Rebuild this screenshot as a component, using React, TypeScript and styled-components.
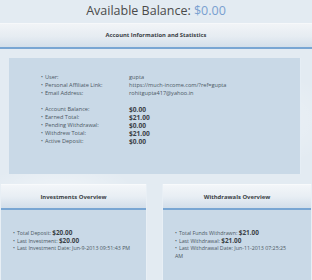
import React from 'react';
import styled, { createGlobalStyle } from 'styled-components';

const GlobalStyle = createGlobalStyle`
  html, body {
    margin: 0;
    padding: 0;
  }

  body {
    width: 312px;
    height: 280px;
    overflow: hidden;
    font-family: "Open Sans", "Liberation Sans", sans-serif;
    background:
      radial-gradient(ellipse 80px 40px at 60px 200px, rgba(255, 255, 255, 0.5), transparent),
      radial-gradient(ellipse 90px 50px at 250px 120px, rgba(255, 255, 255, 0.4), transparent),
      #e3ebf2;
  }
`;

const Page = styled.div`
  width: 312px;
`;

const Balance = styled.div`
  height: 23px;
  line-height: 22px;
  text-align: center;
  font-size: 12.5px;
  color: #4a4a4a;

  span {
    color: #79a0d0;
  }
`;

const BarHeader = styled.div`
  height: 23px;
  line-height: 23px;
  text-align: center;
  font-size: 5.8px;
  font-weight: 700;
  color: #3a3f45;
  border-top: 1px solid #f6f8fa;
  border-bottom: 2px solid #79a6d3;
  background: linear-gradient(to bottom, #f1f4f7 0%, #e6ecf2 55%, #d3dfea 100%);
`;

const Panel = styled.div`
  margin: 9px 11px 0 9px;
  height: 116px;
  box-sizing: border-box;
  padding: 15px 0 0 32px;
  background: #c9d9e7;
  border-right: 1px solid #e6eef5;
`;

const List = styled.div<{ $labelWidth?: number }>`
  display: grid;
  grid-template-columns: ${(p) => (p.$labelWidth ? `${p.$labelWidth}px 1fr` : '1fr')};
  grid-auto-rows: 8px;
  align-items: center;
  font-size: 5.6px;
  color: #4b5863;
`;

const Label = styled.div`
  white-space: nowrap;

  &::before {
    content: '•';
    margin-right: 2px;
    font-size: 5px;
  }
`;

const Value = styled.div<{ $bold?: boolean }>`
  white-space: nowrap;
  font-size: ${(p) => (p.$bold ? '6.6px' : '5.6px')};
  font-weight: ${(p) => (p.$bold ? 700 : 400)};
  color: ${(p) => (p.$bold ? '#3a4046' : '#4b5863')};
`;

const Spacer = styled.div`
  grid-column: 1 / -1;
`;

const Cards = styled.div`
  display: grid;
  grid-template-columns: 147px 1fr;
  column-gap: 15px;
  margin-top: 10px;
`;

const Card = styled.div`
  height: 97px;
  background: #c9d9e7;
  border-left: 1px solid #e8eff5;
  border-right: 1px solid #e8eff5;
`;

const CardHeader = styled.div`
  height: 23px;
  line-height: 24px;
  text-align: center;
  font-size: 5.9px;
  font-weight: 700;
  color: #3a3f45;
  border-top: 1px solid #f8fafc;
  border-bottom: 2px solid #79a6d3;
  background: linear-gradient(to bottom, #f3f6f9 0%, #e8eef4 50%, #d2deea 100%);
`;

const CardBody = styled.div<{ $padRight: number }>`
  padding: 19px ${(p) => p.$padRight}px 0 12px;
`;

const CardRow = styled.div`
  font-size: 5.3px;
  line-height: 7.2px;
  color: #4b5863;

  &::before {
    content: '•';
    margin-right: 2px;
    font-size: 5px;
  }

  b {
    font-size: 6.4px;
    color: #3a4046;
  }
`;

const account = [
  ['User:', 'gupta'],
  ['Personal Affiliate Link:', 'https://much-income.com/?ref=gupta'],
  ['Email Address:', 'rohitgupta417@yahoo.in'],
];

const stats = [
  ['Account Balance:', '$0.00'],
  ['Earned Total:', '$21.00'],
  ['Pending Withdrawal:', '$0.00'],
  ['Withdrew Total:', '$21.00'],
  ['Active Deposit:', '$0.00'],
];

const App = () => {
  return (
    <Page>
      <GlobalStyle />
      <Balance>
        Available Balance: <span>$0.00</span>
      </Balance>
      <BarHeader>Account Information and Statistics</BarHeader>
      <Panel>
        <List $labelWidth={88}>
          {account.map(([k, v]) => (
            <React.Fragment key={k}>
              <Label>{k}</Label>
              <Value>{v}</Value>
            </React.Fragment>
          ))}
          <Spacer />
          {stats.map(([k, v]) => (
            <React.Fragment key={k}>
              <Label>{k}</Label>
              <Value $bold>{v}</Value>
            </React.Fragment>
          ))}
        </List>
      </Panel>
      <Cards>
        <Card>
          <CardHeader>Investments Overview</CardHeader>
          <CardBody $padRight={8}>
            <CardRow>
              Total Deposit: <b>$20.00</b>
            </CardRow>
            <CardRow>
              Last Investment: <b>$20.00</b>
            </CardRow>
            <CardRow>Last Investment Date: Jun-9-2013 09:51:43 PM</CardRow>
          </CardBody>
        </Card>
        <Card>
          <CardHeader>Withdrawals Overview</CardHeader>
          <CardBody $padRight={22}>
            <CardRow>
              Total Funds Withdrawn: <b>$21.00</b>
            </CardRow>
            <CardRow>
              Last Withdrawal: <b>$21.00</b>
            </CardRow>
            <CardRow>Last Withdrawal Date: Jun-11-2013 07:25:25 AM</CardRow>
          </CardBody>
        </Card>
      </Cards>
    </Page>
  );
};

export default App;
